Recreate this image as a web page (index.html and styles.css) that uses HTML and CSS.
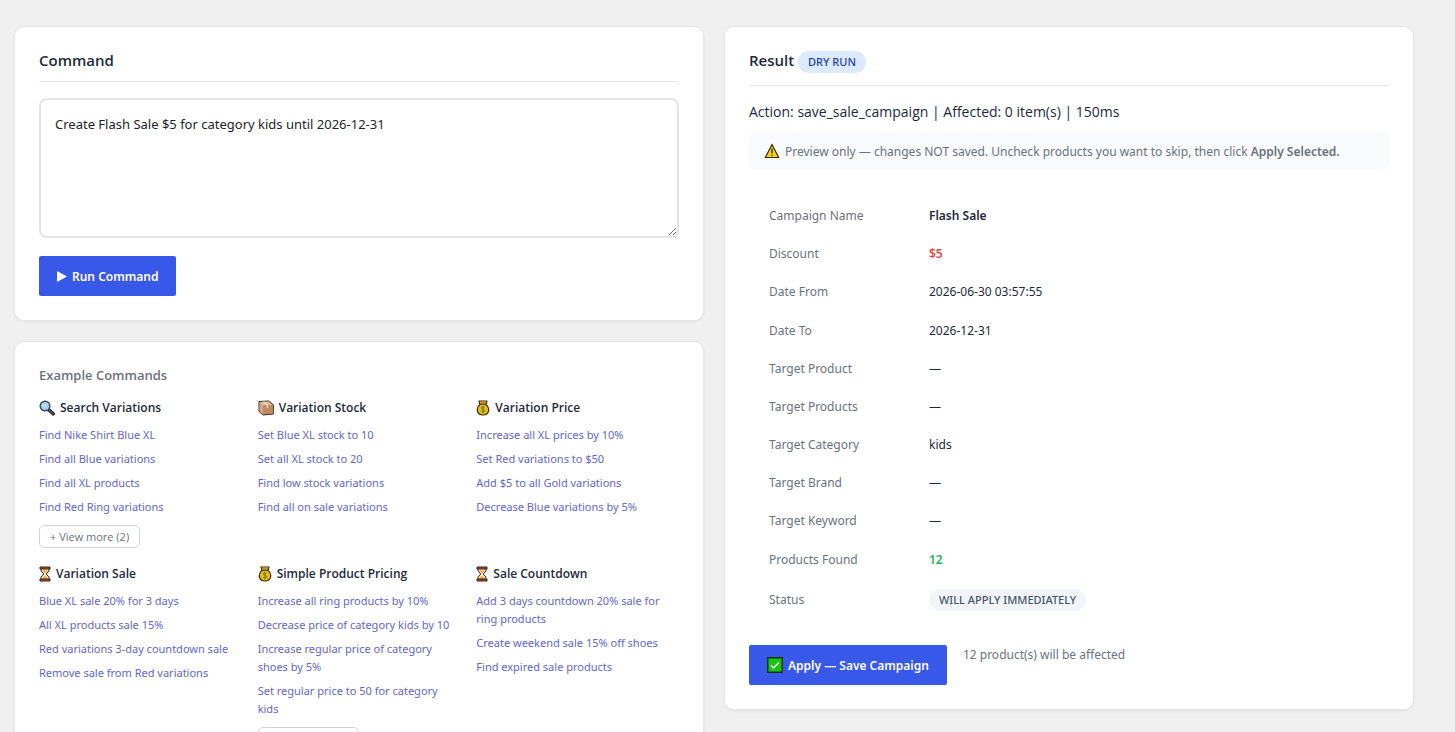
FILE: index.html
```
<!DOCTYPE html>
<html lang="en">
<head>
  <meta charset="UTF-8">
  <meta name="viewport" content="width=device-width, initial-scale=1">
  <title>Command</title>
  <link rel="stylesheet" href="styles.css">
</head>
<body>

<!-- Icons -->
<svg class="sprite" aria-hidden="true">
  <symbol id="icon-search" viewBox="0 0 16 16">
    <path d="M9.5 9.5l4.6 4.3" stroke="#222" stroke-width="3.6" stroke-linecap="round"/>
    <path d="M10 10l4 3.700" stroke="#5b5b5b" stroke-width="1.400" stroke-linecap="round"/>
    <circle cx="6" cy="6" r="4.800" fill="#9fd0f2" stroke="#3b4650" stroke-width="1.400"/>
    <path d="M3.400 6.600L6.800 3.200M5 8l3.500-3.500" stroke="#d3ecfb" stroke-width="1"/>
  </symbol>
  <symbol id="icon-box" viewBox="0 0 16 16">
    <path d="M1 1.500L10.500 1L15.300 4.800V14L5 15L1 11.500Z" fill="#b98a66" stroke="#2e2520" stroke-width="1"/>
    <path d="M1.500 2L10.300 1.500L14.800 5L5 5.400Z" fill="#e2bd9e"/>
    <path d="M1.500 2L5 5.400V14.400L1.500 11.300Z" fill="#d3a788"/>
    <path d="M5 5.400L14.800 5V13.500L5 14.500Z" fill="#be8a5e"/>
    <path d="M5.500 1.800L9.400 5.200V8" fill="none" stroke="#f1dccb" stroke-width="1.300"/>
  </symbol>
  <symbol id="icon-money" viewBox="0 0 14 16">
    <path d="M3 1h8l-1 3.600c4.600 3.400 3.200 10.400-3 10.400s-7.600-7-3-10.400z" fill="#f3b90c" stroke="#332709" stroke-width="1.200" stroke-linejoin="round"/>
    <path d="M3.500 1.500h7l-.8 2.400H4.300z" fill="#c98a3a"/>
    <path d="M4 4.300h6" stroke="#4a3510" stroke-width="1"/>
    <path d="M8.600 7.300c-1-.8-3.200-.6-3.200.8 0 1.800 3.300.9 3.300 2.600 0 1.400-2.300 1.500-3.400.6M7 6v7.400" fill="none" stroke="#3f8a22" stroke-width="1"/>
  </symbol>
  <symbol id="icon-hourglass" viewBox="0 0 12 16">
    <path d="M2 2.500h8v2.300L7.300 8 10 11.200v2.300H2v-2.300L4.700 8 2 4.800z" fill="#fbe6c6" stroke="#33251f" stroke-width="1"/>
    <path d="M3.200 4.300h5.600L6 7.700zM6 9.500l3 3.500H3z" fill="#f2b04a"/>
    <path d="M1 1h10v2H1zM1 13h10v2H1z" fill="#c2512f" stroke="#33201a" stroke-width="1"/>
  </symbol>
  <symbol id="icon-warning" viewBox="0 0 16 16">
    <path d="M8 1.500L14.700 14.500H1.300Z" fill="#f7d40a" stroke="#2d2a12" stroke-width="1.200" stroke-linejoin="round"/>
    <path d="M8 5.500v5M8 11.700v1.400" stroke="#2d2a12" stroke-width="1.300"/>
  </symbol>
  <symbol id="icon-check" viewBox="0 0 16 16">
    <path d="M.8.8h14.400v14.400H.8z" fill="#16c60c" stroke="#14301a" stroke-width="1.400"/>
    <path d="M4 8.300l2.600 2.600L12 5.300" fill="none" stroke="#fff" stroke-width="1.400"/>
  </symbol>
  <symbol id="icon-play" viewBox="0 0 10 11">
    <path d="M0 0l10 5.500L0 11z" fill="#fff"/>
  </symbol>
</svg>

<main class="layout">
  <div class="column">
    <section class="card">
      <h2><label for="command">Command</label></h2>
      <textarea id="command" class="command-input" spellcheck="false">Create Flash Sale $5 for category kids until 2026-12-31</textarea>
      <button type="button" class="btn"><svg class="play"><use href="#icon-play"/></svg>Run Command</button>
    </section>

    <section class="card">
      <h3>Example Commands</h3>
      <div class="examples">
        <div class="group">
          <h4><svg class="icon"><use href="#icon-search"/></svg>Search Variations</h4>
          <a href="#">Find Nike Shirt Blue XL</a>
          <a href="#">Find all Blue variations</a>
          <a href="#">Find all XL products</a>
          <a href="#">Find Red Ring variations</a>
          <button type="button" class="view-more">+ View more (2)</button>
        </div>
        <div class="group">
          <h4><svg class="icon"><use href="#icon-box"/></svg>Variation Stock</h4>
          <a href="#">Set Blue XL stock to 10</a>
          <a href="#">Set all XL stock to 20</a>
          <a href="#">Find low stock variations</a>
          <a href="#">Find all on sale variations</a>
        </div>
        <div class="group">
          <h4><svg class="icon narrow"><use href="#icon-money"/></svg>Variation Price</h4>
          <a href="#">Increase all XL prices by 10%</a>
          <a href="#">Set Red variations to $50</a>
          <a href="#">Add $5 to all Gold variations</a>
          <a href="#">Decrease Blue variations by 5%</a>
        </div>
        <div class="group">
          <h4><svg class="icon thin"><use href="#icon-hourglass"/></svg>Variation Sale</h4>
          <a href="#">Blue XL sale 20% for 3 days</a>
          <a href="#">All XL products sale 15%</a>
          <a href="#">Red variations 3-day countdown sale</a>
          <a href="#">Remove sale from Red variations</a>
        </div>
        <div class="group">
          <h4><svg class="icon narrow"><use href="#icon-money"/></svg>Simple Product Pricing</h4>
          <a href="#">Increase all ring products by 10%</a>
          <a href="#">Decrease price of category kids by 10</a>
          <a href="#">Increase regular price of category shoes by 5%</a>
          <a href="#">Set regular price to 50 for category kids</a>
          <button type="button" class="view-more">+ View more (2)</button>
        </div>
        <div class="group">
          <h4><svg class="icon thin"><use href="#icon-hourglass"/></svg>Sale Countdown</h4>
          <a href="#">Add 3 days countdown 20% sale for ring products</a>
          <a href="#">Create weekend sale 15% off shoes</a>
          <a href="#">Find expired sale products</a>
        </div>
      </div>
    </section>
  </div>

  <section class="card">
    <h2>Result <span class="badge badge-info">DRY RUN</span></h2>
    <p class="summary">Action: save_sale_campaign | Affected: 0 item(s) | 150ms</p>
    <p class="notice"><svg class="icon"><use href="#icon-warning"/></svg>Preview only — changes NOT saved. Uncheck products you want to skip, then click <strong>Apply Selected.</strong></p>

    <table class="details">
      <tr><th scope="row">Campaign Name</th><td><strong>Flash Sale</strong></td></tr>
      <tr><th scope="row">Discount</th><td><strong class="red">$5</strong></td></tr>
      <tr><th scope="row">Date From</th><td>2026-06-30 03:57:55</td></tr>
      <tr><th scope="row">Date To</th><td>2026-12-31</td></tr>
      <tr><th scope="row">Target Product</th><td>—</td></tr>
      <tr><th scope="row">Target Products</th><td>—</td></tr>
      <tr><th scope="row">Target Category</th><td>kids</td></tr>
      <tr><th scope="row">Target Brand</th><td>—</td></tr>
      <tr><th scope="row">Target Keyword</th><td>—</td></tr>
      <tr><th scope="row">Products Found</th><td><strong class="green">12</strong></td></tr>
      <tr><th scope="row">Status</th><td><span class="badge badge-muted">WILL APPLY IMMEDIATELY</span></td></tr>
    </table>

    <div class="actions">
      <button type="button" class="btn"><svg class="icon"><use href="#icon-check"/></svg>Apply — Save Campaign</button>
      <span class="affected">12 product(s) will be affected</span>
    </div>
  </section>
</main>

</body>
</html>
```
FILE: styles.css
```
* {
  box-sizing: border-box;
}

body {
  margin: 0;
  padding: 26px 41px 26px 14px;
  background: #f0f0f0;
  color: #1e293b;
  font-family: "Segoe UI", "Noto Sans", "Open Sans", sans-serif;
  font-size: 12px;
}

h2, h3, h4, p {
  margin: 0;
}

h2, h3, h4, .summary {
  font-family: "Segoe UI", "Open Sans", "Noto Sans", sans-serif;
}

.sprite {
  position: absolute;
  width: 0;
  height: 0;
}

.layout {
  display: grid;
  grid-template-columns: 1fr 1fr;
  align-items: start;
  gap: 20px;
}

.column {
  display: flex;
  flex-direction: column;
  gap: 20px;
}

.card {
  background: #fff;
  border: 1px solid #e5e7eb;
  border-radius: 10px;
  padding: 24px;
  box-shadow: 0 1px 3px rgba(0, 0, 0, 0.06);
}

h2 {
  font-size: 15px;
  line-height: 18px;
  font-weight: 600;
  padding-bottom: 12px;
  border-bottom: 1px solid #e5e7eb;
  margin-bottom: 16px;
}

/* Left column */
.command-input {
  display: block;
  width: 100%;
  height: 140px;
  padding: 14px;
  border: 2px solid #e2e4ea;
  border-radius: 8px;
  color: #1f2328;
  font-family: inherit;
  font-size: 13px;
  line-height: 20px;
  resize: vertical;
  margin-bottom: 18px;
}

.btn {
  display: inline-flex;
  align-items: center;
  height: 40px;
  padding: 0 18px;
  border: none;
  border-radius: 2px;
  background: #3858e9;
  color: #fff;
  font-family: inherit;
  font-size: 12px;
  font-weight: 600;
  white-space: nowrap;
  cursor: pointer;
}

.play {
  width: 10px;
  height: 11px;
  margin-right: 5px;
}

.icon {
  flex: none;
  width: 16px;
  height: 16px;
  margin-right: 5px;
}

.icon.narrow {
  width: 14px;
}

.icon.thin {
  width: 12px;
}

h3 {
  font-size: 13px;
  line-height: 18px;
  font-weight: 600;
  color: #6b7280;
  margin-bottom: 15px;
}

.examples {
  display: grid;
  grid-template-columns: repeat(3, 1fr);
  gap: 17px 16px;
}

.group h4 {
  display: flex;
  align-items: center;
  font-size: 12px;
  line-height: 18px;
  font-weight: 600;
  margin-bottom: 6px;
}

.group a {
  display: block;
  padding: 3px 0;
  color: #6366d1;
  font-size: 11px;
  line-height: 18px;
  text-decoration: none;
}

.group a:hover {
  text-decoration: underline;
}

.view-more {
  display: block;
  height: 23px;
  margin-top: 6px;
  padding: 0 10px;
  border: 1px solid #d1d5db;
  border-radius: 5px;
  background: #fff;
  color: #6b7280;
  font-family: "Segoe UI", "Open Sans", sans-serif;
  font-size: 11px;
  cursor: pointer;
}

/* Right column */
.badge {
  display: inline-block;
  padding: 2px 10px;
  border-radius: 11px;
  font-family: "Segoe UI", "Noto Sans", sans-serif;
  font-size: 11px;
  line-height: 18px;
  font-weight: 500;
}

.badge-info {
  background: #dbeafe;
  color: #1e40af;
}

.badge-muted {
  background: #f1f5f9;
  color: #475569;
}

.summary {
  font-size: 14px;
  line-height: 20px;
  margin-bottom: 10px;
}

.notice {
  display: flex;
  align-items: center;
  min-height: 38px;
  padding: 0 15px;
  border-radius: 6px;
  background: #f8fafc;
  color: #6b7280;
  font-size: 12px;
  white-space: pre-wrap;
}

strong {
  font-weight: 600;
}

.details {
  width: 100%;
  height: 424px;
  margin: 27px 0 24px;
  padding: 0 20px;
  border-spacing: 0;
  font-size: 12px;
  line-height: 18px;
}

.details th,
.details td {
  padding: 10px 0;
  text-align: left;
}

.details th {
  width: 160px;
  color: #6b7280;
  font-weight: 400;
}

.details .red {
  color: #e04848;
}

.details .green {
  color: #22b45a;
}

.actions {
  display: flex;
  gap: 16px;
}

.affected {
  color: #6b7280;
  line-height: 20px;
}
```
